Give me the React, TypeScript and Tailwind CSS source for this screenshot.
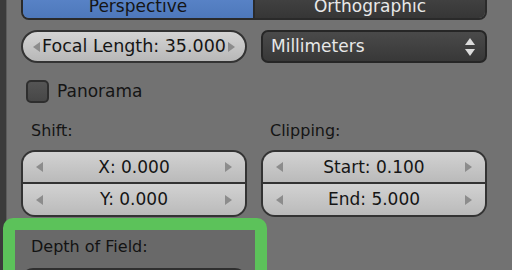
import React from "react";

const font = { fontFamily: '"DejaVu Sans", "Liberation Sans", sans-serif' };

function Arrow({ dir, className }: { dir: "l" | "r"; className?: string }) {
  return (
    <svg width="7" height="10" viewBox="0 0 7 10" className={className}>
      {dir === "l" ? (
        <polygon points="7,0 7,10 0,5" fill="currentColor" />
      ) : (
        <polygon points="0,0 0,10 7,5" fill="currentColor" />
      )}
    </svg>
  );
}

function NumRow({ label, top }: { label: string; top?: boolean }) {
  return (
    <div
      className={`flex items-center px-[13px] bg-gradient-to-b from-[#d2d2d2] to-[#bababa] text-[#151515] ${
        top ? "h-[32px] border-b-2 border-[#333]" : "h-[31px]"
      }`}
    >
      <Arrow dir="l" className="text-[#8c8c8c]" />
      <span className="flex-1 text-center text-[17px] leading-none">{label}</span>
      <Arrow dir="r" className="text-[#8c8c8c]" />
    </div>
  );
}

function NumGroup({ a, b }: { a: string; b: string }) {
  return (
    <div className="rounded-[14px] border-2 border-[#333] overflow-hidden">
      <NumRow label={a} top />
      <NumRow label={b} />
    </div>
  );
}

export default function App() {
  return (
    <div className="relative w-[512px] h-[270px] overflow-hidden flex bg-[#727272]" style={font}>
      {/* editor edge */}
      <div className="w-[7px] shrink-0 bg-[#3b3b3b] border-r border-[#5c5c5c]" />

      <div className="flex-1 pl-[14px] pr-[25px]">
        {/* projection toggle */}
        <div className="flex h-[33px] mt-[-13px] rounded-b-[8px] border-2 border-[#2a2a2a] overflow-hidden">
          <div className="w-[232px] flex items-end justify-center pb-[3px] bg-gradient-to-b from-[#5d88cc] to-[#4e78bb] text-[#151515] text-[17px] leading-none border-r-2 border-[#2a2a2a]">
            Perspective
          </div>
          <div className="flex-1 flex items-end justify-center pb-[3px] bg-gradient-to-b from-[#474747] to-[#363636] text-[#e8e8e8] text-[17px] leading-none">
            Orthographic
          </div>
        </div>

        {/* focal length + units */}
        <div className="flex gap-[14px] mt-[10px]">
          <div className="w-[226px] h-[33px] rounded-full border-2 border-[#333] bg-gradient-to-b from-[#d4d4d4] to-[#b8b8b8] flex items-center justify-center gap-[2px] text-[#151515] text-[17.5px] leading-none">
            <Arrow dir="l" className="text-[#8c8c8c]" />
            <span>Focal Length: 35.000</span>
            <Arrow dir="r" className="text-[#8c8c8c]" />
          </div>
          <div className="flex-1 h-[33px] rounded-[7px] border-2 border-[#262626] bg-gradient-to-b from-[#4a4a4a] to-[#383838] flex items-center pl-[8px] pr-[10px] text-[#e8e8e8] text-[17px] leading-none">
            <span className="flex-1">Millimeters</span>
            <svg width="10" height="18" viewBox="0 0 10 18">
              <polygon points="5,0 10,7 0,7" fill="#dcdcdc" />
              <polygon points="0,11 10,11 5,18" fill="#dcdcdc" />
            </svg>
          </div>
        </div>

        {/* panorama */}
        <div className="flex items-center mt-[17px] ml-[5px] gap-[8px]">
          <div className="w-[23px] h-[23px] rounded-[5px] border-2 border-[#2e2e2e] bg-gradient-to-b from-[#555] to-[#474747]" />
          <span className="text-[17px] leading-none text-[#151515]">Panorama</span>
        </div>

        {/* shift / clipping */}
        <div className="flex gap-[14px] mt-[19px]">
          <div className="w-[226px] flex flex-col">
            <span className="ml-[10px] text-[16px] leading-none text-[#151515] h-[28px] pt-[1px]">Shift:</span>
            <NumGroup a="X: 0.000" b="Y: 0.000" />
          </div>
          <div className="flex-1 flex flex-col">
            <span className="ml-[9px] text-[16px] leading-none text-[#151515] h-[28px] pt-[1px]">Clipping:</span>
            <NumGroup a="Start: 0.100" b="End: 5.000" />
          </div>
        </div>

        {/* depth of field */}
        <div className="w-[226px] mt-[22px]">
          <div className="h-[29px] ml-[10px] text-[16px] leading-none text-[#151515]">Depth of Field:</div>
          <div className="h-[20px] rounded-t-[12px] border-2 border-[#333] bg-gradient-to-b from-[#d2d2d2] to-[#c0c0c0]" />
        </div>
      </div>

      {/* highlight */}
      <div className="absolute left-[3px] top-[218px] w-[264px] h-[80px] rounded-[10px] border-[12px] border-[#5cc25a] bg-[#000]/[0.07] pointer-events-none" />
    </div>
  );
}
